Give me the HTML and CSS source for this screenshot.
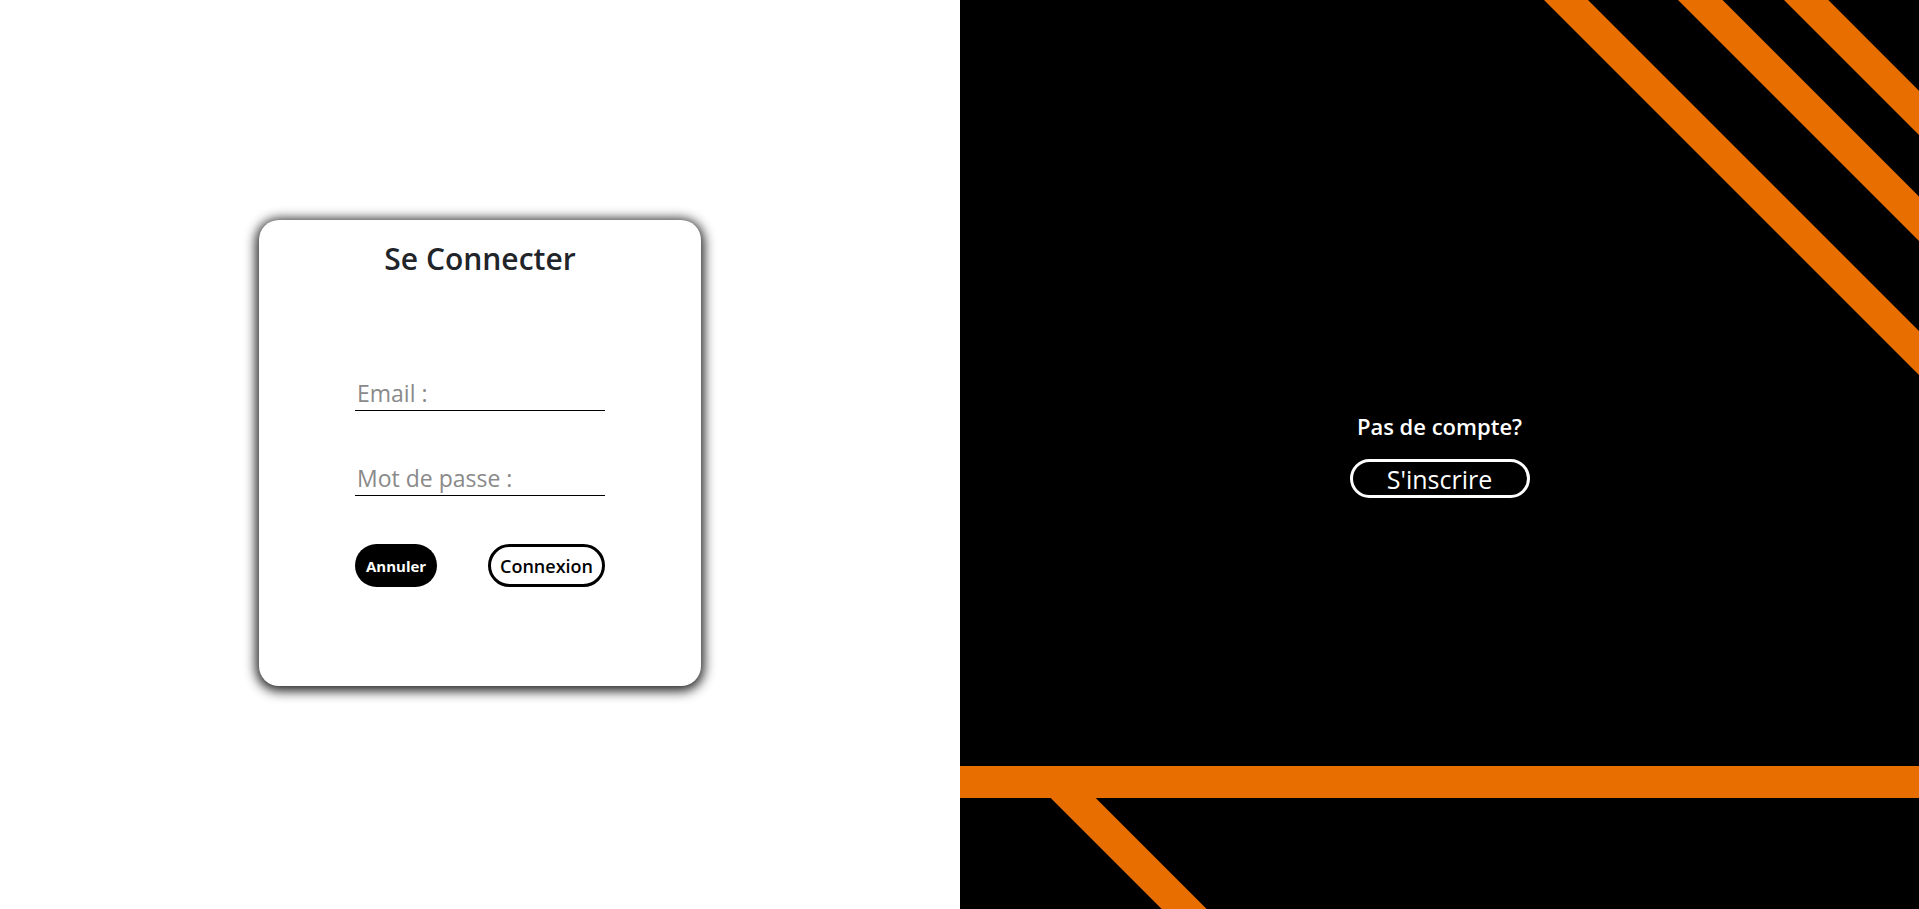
FILE: index.html
```html
<!DOCTYPE html>
<html lang="fr">
<head>
<meta charset="utf-8">
<title>Se Connecter</title>
<link rel="stylesheet" href="styles.css">
</head>
<body>
<div class="page">
  <section class="left">
    <form class="card">
      <h2 class="title">Se Connecter</h2>
      <div class="fields">
        <input class="field" type="email" placeholder="Email :">
        <input class="field" type="password" placeholder="Mot de passe :">
      </div>
      <div class="actions">
        <button type="button" class="btn btn-cancel">Annuler</button>
        <button type="submit" class="btn btn-login">Connexion</button>
      </div>
    </form>
  </section>
  <section class="right">
    <svg class="stripes" viewBox="0 0 959 909" preserveAspectRatio="none" aria-hidden="true">
      <polygon points="584,0 628,0 959,331 959,375"/>
      <polygon points="718,0 762.5,0 959,196.5 959,241"/>
      <polygon points="824,0 868.3,0 959,90.7 959,135"/>
      <polygon points="58.7,766 103.7,766 246.7,909 201.7,909"/>
      <rect x="0" y="766" width="959" height="32"/>
    </svg>
    <div class="signup">
      <p class="signup-text">Pas de compte?</p>
      <button type="button" class="btn-signup">S'inscrire</button>
    </div>
  </section>
</div>
</body>
</html>
```

FILE: styles.css
```css
html, body {
  margin: 0;
  padding: 0;
  height: 100%;
}

body {
  font-family: "Open Sans", "Noto Sans", sans-serif;
  color: #212529;
}

.page {
  display: flex;
  height: 100vh;
}

.left {
  width: 960px;
  background: #ffffff;
  display: flex;
  align-items: center;
  justify-content: center;
}

.card {
  box-sizing: border-box;
  width: 442px;
  height: 466px;
  margin-bottom: 3px;
  padding-top: 20px;
  border-radius: 20px;
  background: #ffffff;
  box-shadow: 0 2px 12px 3px rgba(0, 0, 0, 0.88);
  display: flex;
  flex-direction: column;
  align-items: center;
}

.title {
  margin: 0;
  font-size: 30px;
  line-height: 38px;
  font-weight: 600;
  color: #212529;
}

.fields {
  margin-top: 98px;
  width: 250px;
  display: flex;
  flex-direction: column;
  gap: 50px;
}

.field {
  box-sizing: border-box;
  width: 250px;
  height: 35px;
  padding: 0 2px;
  border: none;
  border-bottom: 1px solid #000;
  outline: none;
  font-family: "Open Sans", "Noto Sans", sans-serif;
  font-size: 23px;
  background: transparent;
}

.field::placeholder {
  color: #8a8a8a;
}

.actions {
  margin-top: 48px;
  width: 250px;
  display: flex;
  justify-content: space-between;
}

.btn {
  box-sizing: border-box;
  height: 43px;
  border-radius: 22px;
  font-family: "Open Sans", "Noto Sans", sans-serif;
  cursor: pointer;
}

.btn-cancel {
  padding: 0 11px;
  background: #000;
  color: #fff;
  border: none;
  font-size: 15px;
  font-weight: 700;
}

.btn-login {
  padding: 0 9px;
  background: #fff;
  color: #000;
  border: 3px solid #000;
  font-size: 18px;
  font-weight: 600;
}

.right {
  position: relative;
  flex: 1;
  background: #000;
  overflow: hidden;
  display: flex;
  align-items: center;
  justify-content: center;
}

.stripes {
  position: absolute;
  inset: 0;
  width: 100%;
  height: 100%;
  fill: #e96e00;
}

.signup {
  position: relative;
  display: flex;
  flex-direction: column;
  align-items: center;
}

.signup-text {
  margin: 0;
  color: #fff;
  font-size: 22px;
  font-weight: 600;
  line-height: 30px;
}

.btn-signup {
  box-sizing: border-box;
  margin-top: 18px;
  width: 180px;
  height: 39px;
  padding-top: 2px;
  border: 3px solid #fff;
  border-radius: 20px;
  background: #000;
  color: #fff;
  font-family: "Open Sans", "Noto Sans", sans-serif;
  font-size: 25px;
  font-weight: 500;
  line-height: 1;
  cursor: pointer;
}
```
